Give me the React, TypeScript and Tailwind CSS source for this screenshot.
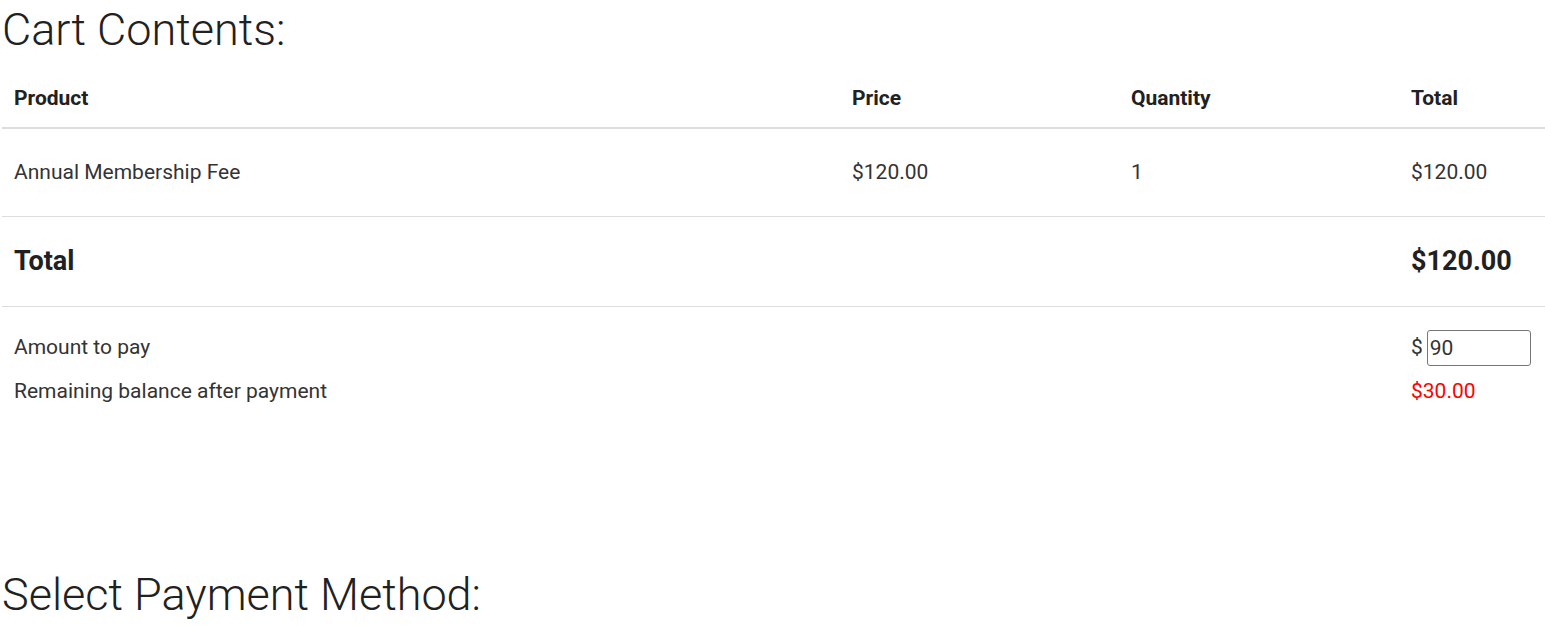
export default function App() {
  const cols = "grid grid-cols-[838px_279px_280px_1fr]";
  return (
    <div className="pl-[2px] text-[#212121] font-['Roboto',sans-serif] text-[21px]">
      <h1 className="text-[45px] font-light leading-[60px]">Cart Contents:</h1>

      <div className="mt-[11px]">
        <div className={`${cols} h-[58px] items-center border-b-2 border-[#dddddd] font-bold`}>
          <div className="px-3">Product</div>
          <div className="px-3">Price</div>
          <div className="px-3">Quantity</div>
          <div className="px-3">Total</div>
        </div>
        <div className={`${cols} h-[88px] items-center border-b border-[#dddddd] text-[#333333]`}>
          <div className="px-3">Annual Membership Fee</div>
          <div className="px-3">$120.00</div>
          <div className="px-3">1</div>
          <div className="px-3">$120.00</div>
        </div>
        <div className={`${cols} h-[90px] items-center border-b border-[#dddddd] text-[27px] font-bold`}>
          <div className="px-3">Total</div>
          <div />
          <div />
          <div className="px-3">$120.00</div>
        </div>
        <div className={`${cols} pt-[19px] items-center text-[#333333]`}>
          <div className="px-3 h-[44px] flex items-center">Amount to pay</div>
          <div />
          <div />
          <div className="px-3 flex items-center gap-[4px]">
            <span>$</span>
            <input
              defaultValue="90"
              className="w-[104px] h-[36px] border border-[#767676] rounded-[3px] px-[2px] text-[21px] outline-none"
            />
          </div>
        </div>
        <div className={`${cols} items-center text-[#333333]`}>
          <div className="px-3 h-[44px] flex items-center">Remaining balance after payment</div>
          <div />
          <div />
          <div className="px-3 text-[#ff0000]">$30.00</div>
        </div>
      </div>

      <h2 className="text-[45px] font-light leading-[60px] mt-[151px]">Select Payment Method:</h2>
    </div>
  );
}
